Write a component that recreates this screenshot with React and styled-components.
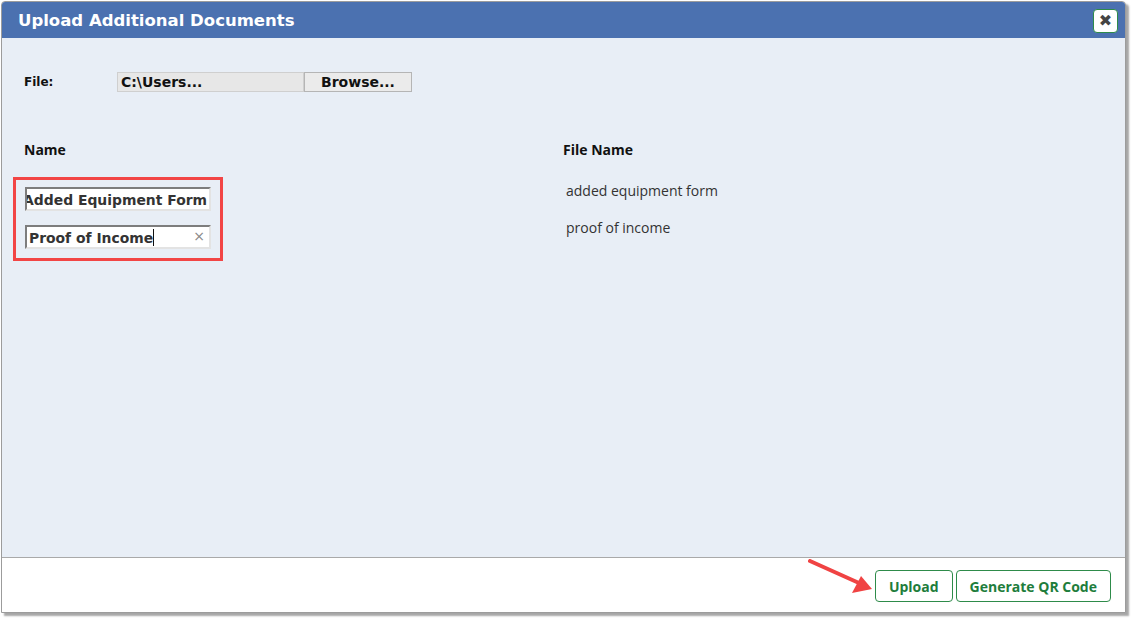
import React from 'react'
import styled, { createGlobalStyle } from 'styled-components'

const Global = createGlobalStyle`
  html, body { margin: 0; padding: 0; background: #fff; }
  body { font-family: "Open Sans", "DejaVu Sans", sans-serif; }
`

const App = () => {
  return (
    <Page>
      <Global />
      <Dialog>
        <Header>
          <Title>Upload Additional Documents</Title>
          <CloseButton aria-label="close">✖</CloseButton>
        </Header>
        <Body>
          <FileRow>
            <FieldLabel>File:</FieldLabel>
            <FilePath>C:\Users...</FilePath>
            <BrowseButton>Browse...</BrowseButton>
          </FileRow>
          <Columns>
            <Column>
              <ColHead>Name</ColHead>
              <Highlight>
                <NameInput scrolled>
                  <InputText>Added Equipment Form</InputText>
                </NameInput>
                <NameInput>
                  <InputText>Proof of Income</InputText>
                  <Caret />
                  <Clear>×</Clear>
                </NameInput>
              </Highlight>
            </Column>
            <Column>
              <ColHead>File Name</ColHead>
              <FileList>
                <FileItem>added equipment form</FileItem>
                <FileItem>proof of income</FileItem>
              </FileList>
            </Column>
          </Columns>
        </Body>
        <Footer>
          <Arrow width="70" height="36" viewBox="0 0 70 36">
            <line x1="3" y1="2" x2="52" y2="24" stroke="#f04343" strokeWidth="4" strokeLinecap="round" />
            <polygon points="65,30 45,34 54,17" fill="#f04343" />
          </Arrow>
          <ActionButton>Upload</ActionButton>
          <ActionButton>Generate QR Code</ActionButton>
        </Footer>
      </Dialog>
    </Page>
  )
}

export default App

const Page = styled.div`
  width: 1132px;
  height: 621px;
  padding: 1px 0 0 1px;
  box-sizing: border-box;
`

const Dialog = styled.div`
  width: 1125px;
  height: 612px;
  box-sizing: border-box;
  border: 1px solid #9c9c9c;
  border-radius: 4px 4px 0 0;
  display: flex;
  flex-direction: column;
  box-shadow: 3px 3px 2px rgba(0, 0, 0, 0.35);
  position: relative;
  background: #fff;
`

const Header = styled.div`
  height: 36px;
  flex: none;
  background: #4b71b0;
  border-radius: 3px 3px 0 0;
  display: flex;
  align-items: center;
  justify-content: space-between;
  padding: 0 7px 0 16px;
`

const Title = styled.div`
  font-family: "DejaVu Sans", Verdana, sans-serif;
  font-weight: bold;
  font-size: 16.5px;
  color: #fff;
`

const CloseButton = styled.div`
  width: 25px;
  height: 24px;
  margin-top: 1px;
  box-sizing: border-box;
  background: #fff;
  border: 1px solid #2e8b4a;
  border-radius: 4px;
  display: flex;
  align-items: center;
  justify-content: center;
  font-size: 16px;
  color: #444;
  font-family: "DejaVu Sans", sans-serif;
`

const Body = styled.div`
  flex: 1;
  background: #e8eef6;
  padding: 34px 22px 0 22px;
  border-bottom: 1px solid #a9a9a9;
`

const FileRow = styled.div`
  display: flex;
  align-items: center;
  height: 20px;
`

const FieldLabel = styled.div`
  width: 93px;
  font-family: "DejaVu Sans", Verdana, sans-serif;
  font-weight: bold;
  font-size: 12px;
  color: #111;
`

const FilePath = styled.div`
  width: 187px;
  height: 20px;
  box-sizing: border-box;
  background: #e7e7e7;
  border: 1px solid #cfcfcf;
  padding-left: 3px;
  font-family: "DejaVu Sans", Verdana, sans-serif;
  font-weight: bold;
  font-size: 14px;
  color: #111;
  line-height: 18px;
`

const BrowseButton = styled.div`
  width: 108px;
  height: 20px;
  box-sizing: border-box;
  background: #ebebeb;
  border: 1px solid #b5b5b5;
  font-family: "DejaVu Sans", Verdana, sans-serif;
  font-weight: bold;
  font-size: 14px;
  color: #111;
  line-height: 18px;
  text-align: center;
`

const Columns = styled.div`
  display: grid;
  grid-template-columns: 539px 1fr;
  margin-top: 49px;
`

const Column = styled.div`
  display: flex;
  flex-direction: column;
`

const ColHead = styled.div`
  font-family: "Open Sans", sans-serif;
  font-weight: bold;
  font-size: 14px;
  color: #111;
  line-height: 18px;
`

const Highlight = styled.div`
  align-self: flex-start;
  margin: 18px 0 0 -11px;
  border: 3px solid #f24545;
  padding: 7px 9px 9px 9px;
  display: flex;
  flex-direction: column;
  gap: 14px;
`

const NameInput = styled.div`
  width: 186px;
  height: 24px;
  box-sizing: border-box;
  background: #fff;
  border-top: 2px solid #7d7d7d;
  border-left: 2px solid #7d7d7d;
  border-right: 2px solid #e3e3e3;
  border-bottom: 2px solid #e3e3e3;
  display: flex;
  align-items: center;
  justify-content: ${p => (p.scrolled ? 'flex-end' : 'flex-start')};
  padding: 1px 2px 0 2px;
  overflow: hidden;
  position: relative;
`

const InputText = styled.span`
  font-family: "DejaVu Sans", Verdana, sans-serif;
  font-weight: bold;
  font-size: 13.9px;
  color: #333;
  white-space: nowrap;
  flex: none;
`

const Caret = styled.span`
  width: 1px;
  height: 17px;
  background: #111;
  flex: none;
`

const Clear = styled.span`
  position: absolute;
  right: 4px;
  top: 1px;
  font-size: 14px;
  color: #888;
  font-family: "DejaVu Sans", sans-serif;
`

const FileList = styled.div`
  display: flex;
  flex-direction: column;
  gap: 18px;
  margin-top: 22px;
  padding-left: 3px;
`

const FileItem = styled.div`
  font-family: "Open Sans", sans-serif;
  font-size: 14px;
  color: #333;
  line-height: 19px;
`

const Footer = styled.div`
  height: 54px;
  flex: none;
  background: #fff;
  display: flex;
  align-items: center;
  justify-content: flex-end;
  gap: 3px;
  padding-right: 14px;
  padding-top: 2px;
  box-sizing: border-box;
  position: relative;
`

const Arrow = styled.svg`
  position: absolute;
  left: 805px;
  top: 1px;
`

const ActionButton = styled.div`
  height: 32px;
  box-sizing: border-box;
  padding: 0 13px;
  border: 1px solid #2e8b4a;
  border-radius: 4px;
  background: #fff;
  color: #1e7d3c;
  font-family: "Open Sans", sans-serif;
  font-weight: bold;
  font-size: 14px;
  display: flex;
  align-items: center;
`
